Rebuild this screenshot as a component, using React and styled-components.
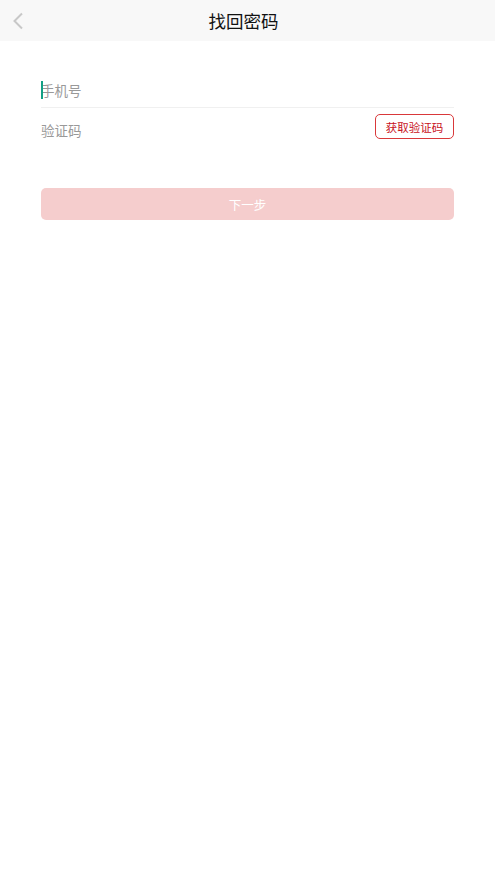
import React from "react";
import styled, { createGlobalStyle } from "styled-components";

const Global = createGlobalStyle`
  html, body { margin: 0; padding: 0; background: #fff; }
  body { font-family: "Noto Sans CJK SC", "Noto Sans", sans-serif; }
  * { box-sizing: border-box; }
`;

const Page = styled.div`
  width: 495px;
  min-height: 880px;
  background: #fff;
`;

const Header = styled.div`
  height: 41px;
  background: #f8f8f8;
  display: grid;
  grid-template-columns: 60px 1fr 60px;
  align-items: center;
`;

const Back = styled.div`
  display: flex;
  align-items: center;
  padding-left: 12px;
  height: 100%;
`;

const Title = styled.div`
  text-align: center;
  font-size: 17.5px;
  color: #111;
  line-height: 41px;
  padding-right: 8px;
`;

const Form = styled.div`
  padding: 40px 41px 0 41px;
  display: flex;
  flex-direction: column;
`;

const PhoneRow = styled.div`
  height: 27px;
  display: flex;
  align-items: center;
  padding-bottom: 8px;
  border-bottom: 1px solid #f0f0f0;
`;

const CodeRow = styled.div`
  height: 40px;
  display: flex;
  align-items: flex-start;
  justify-content: space-between;
`;

const Field = styled.div`
  display: flex;
  align-items: center;
  font-size: 13.5px;
  line-height: 20px;
  color: #999;
  position: relative;
  margin-top: ${(p) => p.top || 0}px;
`;

const Caret = styled.span`
  width: 2px;
  height: 18px;
  background: #13a085;
  position: absolute;
  left: 0;
  top: 50%;
  transform: translateY(-50%);
`;

const CodeButton = styled.div`
  margin-top: 6px;
  width: 79px;
  height: 25px;
  border: 1px solid #d9383a;
  border-radius: 5px;
  color: #c8101a;
  font-size: 11.5px;
  display: flex;
  align-items: center;
  justify-content: center;
`;

const Next = styled.div`
  margin-top: 40px;
  height: 32px;
  border-radius: 5px;
  background: #f5cdcd;
  color: #fff;
  font-size: 12.5px;
  display: flex;
  align-items: center;
  justify-content: center;
`;

export default function App() {
  return (
    <Page>
      <Global />
      <Header>
        <Back>
          <svg width="12" height="18" viewBox="0 0 12 18">
            <path d="M10 1.5 L2.5 9 L10 16.5" fill="none" stroke="#c8c8c8" strokeWidth="2" />
          </svg>
        </Back>
        <Title>找回密码</Title>
        <div />
      </Header>
      <Form>
        <PhoneRow>
          <Field>
            <Caret />
            手机号
          </Field>
        </PhoneRow>
        <CodeRow>
          <Field top={12}>验证码</Field>
          <CodeButton>获取验证码</CodeButton>
        </CodeRow>
        <Next>下一步</Next>
      </Form>
    </Page>
  );
}
